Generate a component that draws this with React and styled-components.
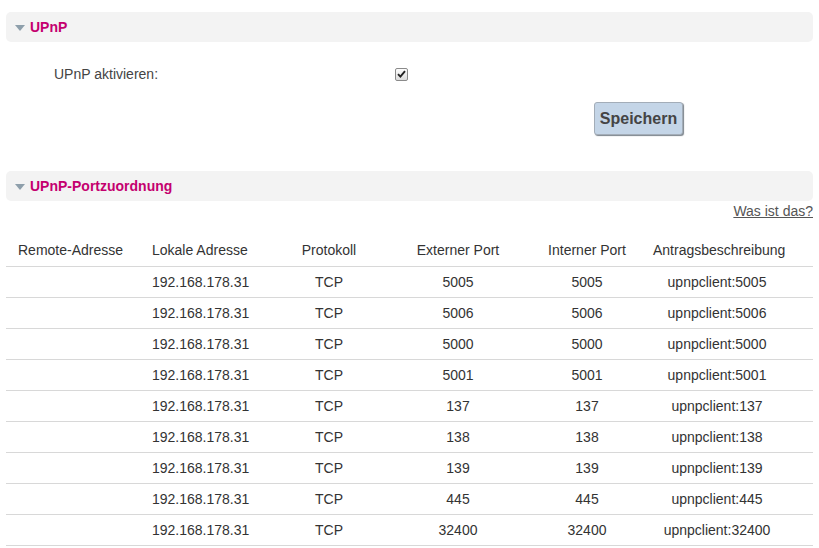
import React from 'react';
import styled, { createGlobalStyle } from 'styled-components';

const GlobalStyle = createGlobalStyle`
  body {
    margin: 0;
    background: #fff;
    font-family: "Liberation Sans", Arial, sans-serif;
    font-size: 14px;
    color: #333;
  }
`;

const Page = styled.div`
  padding: 12px 6px 0 6px;
  width: 807px;
`;

const SectionHeader = styled.div`
  height: 30px;
  background: #f3f3f3;
  border-radius: 5px;
  display: flex;
  align-items: center;
  padding-left: 9px;
  gap: 5px;
  margin-top: ${p => p.$top || 0}px;
`;

const Arrow = styled.span`
  width: 0;
  height: 0;
  border-left: 5px solid transparent;
  border-right: 5px solid transparent;
  border-top: 6px solid #8e9fab;
  margin-top: 2px;
`;

const Title = styled.h2`
  margin: 0;
  font-size: 14px;
  font-weight: bold;
  color: #c4006f;
`;

const FormRow = styled.div`
  display: grid;
  grid-template-columns: 341px auto;
  align-items: center;
  height: 20px;
  margin-top: 22px;
  padding-left: 48px;
  color: #444;
`;

const CheckBox = styled.span`
  width: 11px;
  height: 11px;
  border: 1px solid #8a8a8a;
  border-radius: 2px;
  background: linear-gradient(#fdfdfd, #dcdcdc);
  display: flex;
  align-items: center;
  justify-content: center;
`;

const ButtonRow = styled.div`
  display: flex;
  justify-content: flex-end;
  padding-right: 130px;
  margin-top: 18px;
`;

const SaveButton = styled.button`
  width: 89px;
  height: 33px;
  background: #c4d5e7;
  border: 1px solid #a3adb8;
  border-radius: 3px;
  box-shadow: 1px 1px 1px #7c848c;
  font-family: "Liberation Sans", Arial, sans-serif;
  font-size: 16px;
  font-weight: bold;
  color: #444;
  padding: 0;
`;

const HelpRow = styled.div`
  display: flex;
  justify-content: flex-end;
  margin-top: 2px;
  line-height: 16px;
`;

const HelpLink = styled.a`
  color: #555;
  text-decoration: underline;
`;

const Table = styled.table`
  width: 807px;
  border-collapse: collapse;
  table-layout: fixed;
  margin-top: 16px;
`;

const Th = styled.th`
  box-sizing: border-box;
  font-weight: normal;
  height: 31px;
  padding: 0 ${p => p.$pr || 0}px 0 ${p => p.$pl || 0}px;
  text-align: ${p => p.$align || 'center'};
  border-bottom: 1px solid #d8d8d8;
  color: #333;
  white-space: nowrap;
  width: ${p => p.$w}px;
`;

const Td = styled.td`
  box-sizing: border-box;
  height: 31px;
  padding: 0 ${p => p.$pr || 0}px 0 ${p => p.$pl || 0}px;
  text-align: ${p => p.$align || 'center'};
  border-bottom: 1px solid #d8d8d8;
  color: #333;
  white-space: nowrap;
`;

const columns = [
  { label: 'Remote-Adresse', w: 134, align: 'left', pl: 12 },
  { label: 'Lokale Adresse', w: 123, align: 'left', pl: 12 },
  { label: 'Protokoll', w: 132 },
  { label: 'Externer Port', w: 126 },
  { label: 'Interner Port', w: 132 },
  { label: 'Antragsbeschreibung', w: 160, pr: 32 },
];

const ports = ['5005', '5006', '5000', '5001', '137', '138', '139', '445', '32400'];

export default function App() {
  return (
    <Page>
      <GlobalStyle />
      <SectionHeader>
        <Arrow />
        <Title>UPnP</Title>
      </SectionHeader>
      <FormRow>
        <span>UPnP aktivieren:</span>
        <CheckBox>
          <svg width="9" height="8" viewBox="0 0 9 8">
            <path d="M1 4.2 L3.4 6.6 L8 1.2" fill="none" stroke="#222" strokeWidth="1.9" />
          </svg>
        </CheckBox>
      </FormRow>
      <ButtonRow>
        <SaveButton>Speichern</SaveButton>
      </ButtonRow>

      <SectionHeader $top={36}>
        <Arrow />
        <Title>UPnP-Portzuordnung</Title>
      </SectionHeader>
      <HelpRow>
        <HelpLink href="#">Was ist das?</HelpLink>
      </HelpRow>
      <Table>
        <thead>
          <tr>
            {columns.map(c => (
              <Th key={c.label} $w={c.w} $align={c.align} $pl={c.pl} $pr={c.pr}>{c.label}</Th>
            ))}
          </tr>
        </thead>
        <tbody>
          {ports.map(p => (
            <tr key={p}>
              <Td $align="left" $pl={12}></Td>
              <Td $align="left" $pl={12}>192.168.178.31</Td>
              <Td>TCP</Td>
              <Td>{p}</Td>
              <Td>{p}</Td>
              <Td $pr={32}>upnpclient:{p}</Td>
            </tr>
          ))}
        </tbody>
      </Table>
    </Page>
  );
}
